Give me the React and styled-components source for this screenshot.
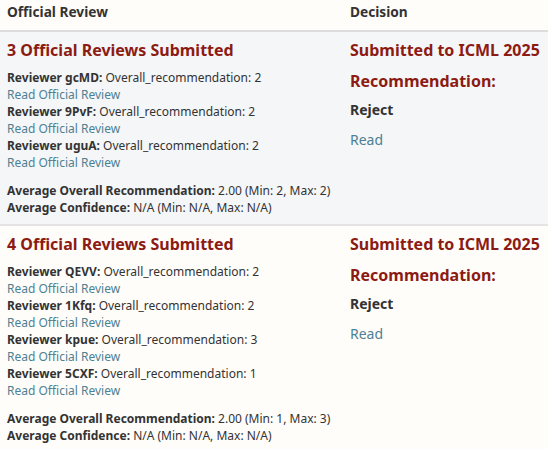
import React from "react";
import styled, { createGlobalStyle } from "styled-components";

const Global = createGlobalStyle`
  html, body { margin: 0; padding: 0; background: #fffdfa; }
  body { font-family: "Noto Sans", "Open Sans", sans-serif; color: #333; }
`;

const Table = styled.div`
  width: 548px;
`;

const HeaderRow = styled.div`
  display: grid;
  grid-template-columns: 343px 1fr;
  height: 30px;
  border-bottom: 2px solid #ddd;
  background: #fffdfa;
`;

const HeaderCell = styled.div`
  padding: 3px 7px 0;
  font-size: 13.7px;
  font-weight: 700;
  line-height: 18px;
  color: #333;
`;

const Row = styled.div`
  display: grid;
  grid-template-columns: 343px 1fr;
  background: ${(p) => (p.$shaded ? "#f5f6f8" : "#fffdfa")};
  border-bottom: ${(p) => (p.$last ? "none" : "2px solid #e4e4e4")};
`;

const Cell = styled.div`
  padding: 7px 7px 8px;
`;

const Title = styled.h4`
  margin: 0 0 8px;
  font-size: 16px;
  line-height: 22px;
  font-weight: 700;
  color: #8c1b13;
`;

const Line = styled.div`
  font-size: 12px;
  line-height: 17px;
  color: #333;
`;

const Bold = styled.strong`
  font-weight: 700;
`;

const Link = styled.a`
  display: block;
  font-size: 12px;
  line-height: 17px;
  color: #4d8093;
  text-decoration: none;
`;

const Summary = styled.div`
  margin-top: 11px;
`;

const DecisionTitle = styled.h4`
  margin: 0 0 9px;
  font-size: 16px;
  line-height: 22px;
  font-weight: 700;
  color: #8c1b13;
`;

const DecisionValue = styled.div`
  font-size: 14px;
  line-height: 18px;
  font-weight: 700;
  color: #333;
  margin-bottom: 12px;
`;

const DecisionLink = styled.a`
  display: block;
  font-size: 14px;
  line-height: 18px;
  color: #4d8093;
  text-decoration: none;
`;

const rows = [
  {
    reviews: [
      ["gcMD", 2],
      ["9PvF", 2],
      ["uguA", 2],
    ],
    avg: "2.00 (Min: 2, Max: 2)",
  },
  {
    reviews: [
      ["QEVV", 2],
      ["1Kfq", 2],
      ["kpue", 3],
      ["5CXF", 1],
    ],
    avg: "2.00 (Min: 1, Max: 3)",
  },
];

export default function App() {
  return (
    <>
      <Global />
      <Table>
        <HeaderRow>
          <HeaderCell>Official Review</HeaderCell>
          <HeaderCell>Decision</HeaderCell>
        </HeaderRow>
        {rows.map((r, i) => (
          <Row key={i} $shaded={i === 0} $last={i === rows.length - 1}>
            <Cell>
              <Title>{r.reviews.length} Official Reviews Submitted</Title>
              {r.reviews.map(([id, score]) => (
                <React.Fragment key={id}>
                  <Line>
                    <Bold>Reviewer {id}:</Bold> Overall_recommendation: {score}
                  </Line>
                  <Link href="#">Read Official Review</Link>
                </React.Fragment>
              ))}
              <Summary>
                <Line>
                  <Bold>Average Overall Recommendation:</Bold> {r.avg}
                </Line>
                <Line>
                  <Bold>Average Confidence:</Bold> N/A (Min: N/A, Max: N/A)
                </Line>
              </Summary>
            </Cell>
            <Cell>
              <DecisionTitle>Submitted to ICML 2025</DecisionTitle>
              <DecisionTitle>Recommendation:</DecisionTitle>
              <DecisionValue>Reject</DecisionValue>
              <DecisionLink href="#">Read</DecisionLink>
            </Cell>
          </Row>
        ))}
      </Table>
    </>
  );
}
